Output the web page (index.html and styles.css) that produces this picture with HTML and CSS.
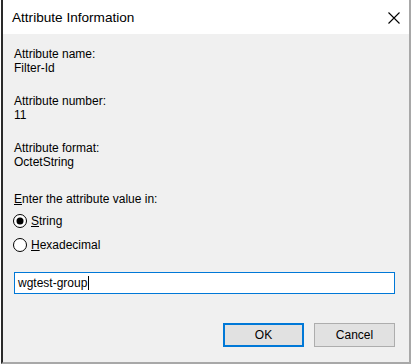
FILE: index.html
```html
<!DOCTYPE html>
<html>
<head>
<meta charset="utf-8">
<link rel="stylesheet" href="styles.css">
</head>
<body>
<div class="frame">
  <div class="titlebar">
    <span class="title">Attribute Information</span>
    <svg class="close" width="12" height="12" viewBox="0 0 12 12"><path d="M0.5 0.5 L11.5 11.5 M11.5 0.5 L0.5 11.5" stroke="#000" stroke-width="1.1" fill="none"/></svg>
  </div>
  <div class="content">
    <div class="group">
      <div class="line">Attribute name:</div>
      <div class="line">Filter-Id</div>
    </div>
    <div class="group">
      <div class="line">Attribute number:</div>
      <div class="line">11</div>
    </div>
    <div class="group">
      <div class="line">Attribute format:</div>
      <div class="line">OctetString</div>
    </div>
    <div class="line prompt"><u>E</u>nter the attribute value in:</div>
    <div class="radios">
      <div class="radio">
        <svg width="14" height="14" viewBox="0 0 14 14"><circle cx="7" cy="7" r="6.5" fill="#fff" stroke="#000" stroke-width="1"/><circle cx="7" cy="7" r="3.5" fill="#000"/></svg>
        <span><u>S</u>tring</span>
      </div>
      <div class="radio">
        <svg width="14" height="14" viewBox="0 0 14 14"><circle cx="7" cy="7" r="6.5" fill="#fff" stroke="#000" stroke-width="1"/></svg>
        <span><u>H</u>exadecimal</span>
      </div>
    </div>
    <div class="input"><span>wgtest-group</span><span class="caret"></span></div>
    <div class="buttons">
      <div class="btn default">OK</div>
      <div class="btn">Cancel</div>
    </div>
  </div>
</div>
</body>
</html>
```
FILE: styles.css
```css
html, body {
  margin: 0;
  padding: 0;
  background: #ffffff;
}
body {
  font-family: "Liberation Sans", Arial, sans-serif;
  color: #000;
}
.frame {
  box-sizing: border-box;
  width: 410px;
  height: 364px;
  margin-left: 1px;
  border-left: 2px solid #2a2a2a;
  border-right: 2px solid #a8a8a8;
  border-bottom: 2px solid #a8a8a8;
  display: flex;
  flex-direction: column;
  background: #f0f0f0;
}
.titlebar {
  height: 34px;
  background: #fff;
  display: flex;
  align-items: center;
  justify-content: space-between;
  padding: 0 9px 0 9px;
  box-sizing: border-box;
}
.title {
  font-size: 13.6px;
  color: #000;
}
.close {
  display: block;
  margin-top: 1px;
}
.content {
  flex: 1;
  padding: 13px 14px 0 11px;
  font-size: 12px;
  display: flex;
  flex-direction: column;
}
.line {
  line-height: 14px;
  height: 14px;
  white-space: nowrap;
}
.group {
  margin-bottom: 19px;
}
.prompt {
  margin-top: 4px;
}
.radios {
  display: flex;
  flex-direction: column;
  gap: 8px;
  margin-top: 7px;
}
.radio {
  display: flex;
  align-items: center;
  gap: 4px;
  height: 16px;
  line-height: 16px;
  margin-left: -1px;
}
.radio svg {
  display: block;
}
.input {
  margin-top: 19px;
  box-sizing: border-box;
  height: 22px;
  border: 1px solid #0078d7;
  background: #fff;
  display: flex;
  align-items: center;
  padding-left: 3px;
  font-size: 12px;
}
.caret {
  display: inline-block;
  width: 1px;
  height: 14px;
  background: #000;
  margin-left: 1px;
}
.buttons {
  margin-top: 29px;
  display: flex;
  justify-content: flex-end;
  gap: 10px;
}
.btn {
  box-sizing: border-box;
  width: 81px;
  height: 24px;
  background: #e1e1e1;
  border: 1px solid #adadad;
  display: flex;
  align-items: center;
  justify-content: center;
  font-size: 12px;
}
.btn.default {
  border: 2px solid #0078d7;
}
```
